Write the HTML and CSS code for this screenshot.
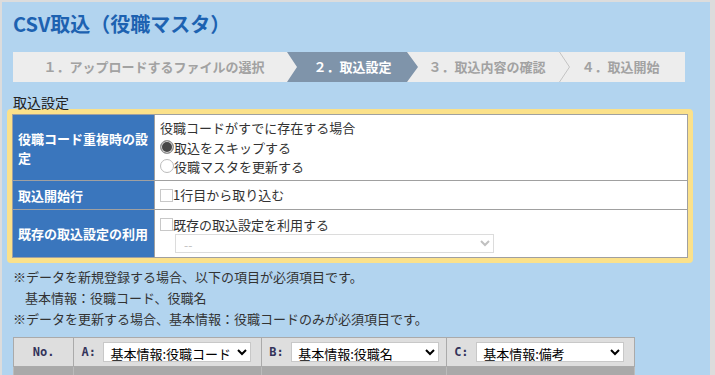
FILE: index.html
```html
<!DOCTYPE html>
<html lang="ja">
<head>
    <meta charset="UTF-8">
    <meta name="viewport" content="width=device-width, initial-scale=1.0">
    <title>CSV取込（役職マスタ）</title>
    <link rel="stylesheet" href="styles.css">
</head>
<body>
    <div class="panel">
        <h1 class="page-title">CSV取込（役職マスタ）</h1>

        <div class="steps">
            <div class="step step-1">１．アップロードするファイルの選択</div>
            <div class="step step-2 current">２．取込設定</div>
            <div class="step step-3">
                ３．取込内容の確認
                <svg class="step-sep" width="11" height="30" viewBox="0 0 11 30">
                    <polyline points="0.5,0 10.5,15 0.5,30" fill="none" stroke="#c4c4c4" stroke-width="1"/>
                </svg>
            </div>
            <div class="step step-4">４．取込開始</div>
        </div>

        <h2 class="section-title">取込設定</h2>

        <div class="setting-frame">
            <table class="setting-table">
                <tr class="row-dup">
                    <th>役職コード重複時の設定</th>
                    <td>
                        <div class="line first">役職コードがすでに存在する場合</div>
                        <label class="line opt"><input type="radio" name="dup" checked>取込をスキップする</label>
                        <label class="line opt"><input type="radio" name="dup">役職マスタを更新する</label>
                    </td>
                </tr>
                <tr class="row-start">
                    <th>取込開始行</th>
                    <td>
                        <label class="line opt"><input type="checkbox">1行目から取り込む</label>
                    </td>
                </tr>
                <tr class="row-saved">
                    <th>既存の取込設定の利用</th>
                    <td>
                        <label class="line opt"><input type="checkbox">既存の取込設定を利用する</label>
                        <select class="saved-select" disabled>
                            <option>--</option>
                        </select>
                    </td>
                </tr>
            </table>
        </div>

        <div class="notes">
            <p>※データを新規登録する場合、以下の項目が必須項目です。</p>
            <p class="indent">基本情報：役職コード、役職名</p>
            <p>※データを更新する場合、基本情報：役職コードのみが必須項目です。</p>
        </div>

        <table class="map-table">
            <tr class="map-head">
                <th class="col-no">No.</th>
                <th class="col-a">
                    <div class="map-cell"><span class="map-key">A:</span>
                        <select><option>基本情報:役職コード</option></select></div>
                </th>
                <th class="col-b">
                    <div class="map-cell"><span class="map-key">B:</span>
                        <select><option>基本情報:役職名</option></select></div>
                </th>
                <th class="col-c">
                    <div class="map-cell"><span class="map-key">C:</span>
                        <select><option>基本情報:備考</option></select></div>
                </th>
            </tr>
            <tr class="map-row">
                <td></td>
                <td></td>
                <td></td>
                <td></td>
            </tr>
        </table>
    </div>
</body>
</html>
```

FILE: styles.css
```css
body {
    margin: 0;
    padding: 0;
    background: #dcdcdc;
    font-family: "Noto Sans CJK JP", "Noto Sans", sans-serif;
    font-size: 13px;
    color: #333;
    overflow: hidden;
}

.panel {
    margin: 2px 5px 0 2px;
    padding: 0 22px 20px 11px;
    background: #b2d4ef;
    height: 400px;
}

.page-title {
    margin: 0;
    padding-top: 8px;
    font-size: 20px;
    line-height: 28px;
    color: #1d62b1;
    font-weight: bold;
}

/* steps */
.steps {
    display: flex;
    margin: 14px 3px 0 0;
    height: 30px;
    background: #ededed;
}

.step {
    position: relative;
    height: 30px;
    line-height: 30px;
    font-size: 13px;
    font-weight: bold;
    color: #a2a2a2;
    text-align: center;
    white-space: nowrap;
}

.step-1 {
    width: 274px;
    padding-left: 8px;
    box-sizing: border-box;
}

.step-2 {
    width: 131px;
    color: #fff;
    background: #7f94aa;
    clip-path: polygon(0 0, 120px 0, 100% 50%, 120px 100%, 0 100%, 10px 50%);
}

.step-3 {
    width: 152px;
    box-sizing: border-box;
    padding-right: 14px;
}

.step-sep {
    position: absolute;
    right: 0;
    top: 0;
}

.step-4 {
    flex: 1;
    padding-right: 14px;
}

/* setting table */
.section-title {
    margin: 12px 0 0;
    font-size: 14px;
    line-height: 16px;
    font-weight: normal;
    color: #222;
}

.setting-frame {
    margin: -1px -5px 0 -6px;
    border: 5px solid #fbe18a;
    border-radius: 4px;
    background: #fbe18a;
}

.setting-table {
    width: 100%;
    border-collapse: collapse;
    background: #fff;
    border: 1px solid #999;
}

.setting-table th,
.setting-table td {
    border: 1px solid #a0a0a0;
    vertical-align: middle;
    padding: 0 5px;
}

.setting-table th {
    width: 132px;
    padding: 0 4px 0 5px;
    background: #3a76bd;
    color: #fff;
    text-align: left;
    font-weight: bold;
    line-height: 19px;
}

.row-dup th {
    height: 65px;
}

.row-start th {
    height: 28px;
}

.row-saved th {
    height: 47px;
}

.row-dup td {
    padding-bottom: 2px;
}

.row-saved td {
    padding-top: 1px;
}

.line {
    display: flex;
    align-items: center;
    line-height: 18px;
}

.line.first {
    line-height: 20px;
}

.row-dup .opt {
    line-height: 19px;
}

.opt input {
    appearance: none;
    -webkit-appearance: none;
    margin: 0;
    width: 13px;
    height: 13px;
    background: #fff;
    border: 1px solid #c8c8c8;
    box-sizing: border-box;
}

.opt input[type="radio"] {
    width: 14px;
    height: 14px;
    border-radius: 50%;
    border-color: #bbb;
}

.opt input[type="radio"]:checked {
    background: #474747;
    border-color: #9a9a9a;
    box-shadow: inset 0 0 0 1px #d6d6d6;
}

.saved-select {
    display: block;
    margin-left: 15px;
    width: 319px;
    height: 19px;
    padding: 0 4px;
    border: 1px solid #dcdcdc;
    border-radius: 0;
    background: #fff;
    color: #c0c0c0;
    font-family: inherit;
    font-size: 12px;
    opacity: 1;
}

/* notes */
.notes {
    margin-top: 3px;
}

.notes p {
    margin: 0;
    line-height: 21px;
    color: #333;
}

.notes .indent {
    padding-left: 12px;
}

/* mapping table */
.map-table {
    margin-top: 8px;
    border-collapse: collapse;
    width: 622px;
}

.map-table th,
.map-table td {
    border: 1px solid #aaa;
    padding: 0;
}

.map-head th {
    height: 28px;
    background: #dedede;
    color: #33335a;
    font-weight: bold;
    font-family: "DejaVu Sans Mono", monospace;
    font-size: 12px;
}

.col-no { width: 60px; }
.col-a { width: 187px; }
.col-b { width: 184px; }
.col-c { width: 187px; }

.map-cell {
    display: flex;
    align-items: center;
    padding-left: 7px;
}

.map-key {
    width: 22px;
    text-align: left;
}

.map-cell select {
    width: 148px;
    height: 20px;
    padding: 0 2px;
    border: 1px solid #c8c8c8;
    border-radius: 0;
    background: #fff;
    color: #000;
    font-family: "Noto Sans CJK JP", sans-serif;
    font-size: 13px;
    font-weight: normal;
}

.map-row td {
    height: 20px;
    background: #a9a9a9;
    border-color: #bbb;
}
```
